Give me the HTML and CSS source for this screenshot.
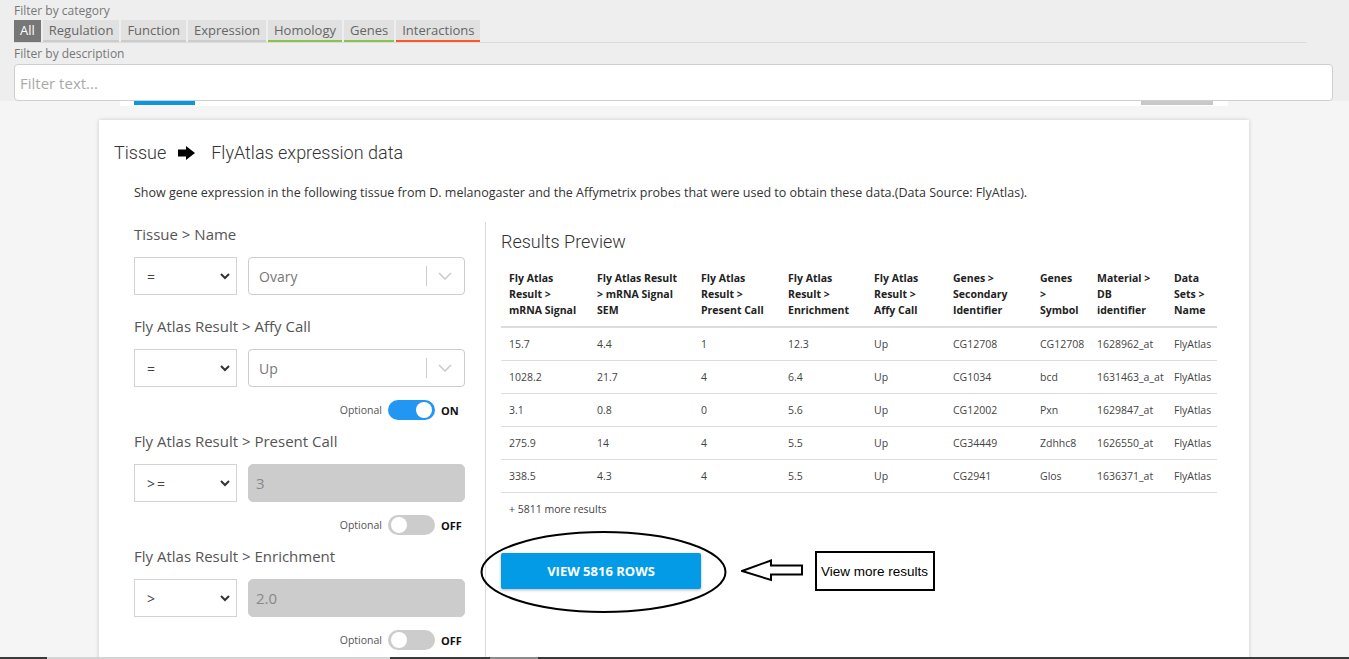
FILE: index.html
```html
<!DOCTYPE html>
<html>
<head>
<meta charset="utf-8">
<title>FlyAtlas expression data</title>
<link rel="stylesheet" href="styles.css">
</head>
<body>
<div class="filters">
  <div class="flabel">Filter by category</div>
  <div class="tabs">
    <span class="tab tab-all">All</span>
    <span class="tab">Regulation</span>
    <span class="tab">Function</span>
    <span class="tab">Expression</span>
    <span class="tab tab-green">Homology</span>
    <span class="tab tab-green">Genes</span>
    <span class="tab tab-orange">Interactions</span>
  </div>
  <div class="flabel flabel-desc">Filter by description</div>
  <input class="finput" type="text" placeholder="Filter text...">
</div>
<div class="peek"><div class="peek-bar"><span class="peek-blue"></span><span class="peek-grey"></span></div></div>

<div class="card">
  <h2 class="title">Tissue <svg class="title-arrow" width="17" height="14" viewBox="0 0 17 14"><polygon points="0,3.5 8,3.5 8,0 17,7 8,14 8,10.5 0,10.5" fill="#000"/></svg> FlyAtlas expression data</h2>
  <p class="desc">Show gene expression in the following tissue from D. melanogaster and the Affymetrix probes that were used to obtain these data.(Data Source: FlyAtlas).</p>
  <div class="body">
    <div class="constraints">
      <div class="field">
        <div class="field-label">Tissue &gt; Name</div>
        <div class="field-row">
          <div class="op"><span>=</span><svg width="10" height="7" viewBox="0 0 10 7"><polyline points="1,1 5,5 9,1" fill="none" stroke="#333" stroke-width="2"/></svg></div>
          <div class="val"><span class="val-text">Ovary</span><span class="val-sep"></span><svg class="val-chev" width="14" height="8" viewBox="0 0 14 8"><polyline points="1,1 7,7 13,1" fill="none" stroke="#ccc" stroke-width="1.6"/></svg></div>
        </div>
      </div>
      <div class="field field-opt">
        <div class="field-label">Fly Atlas Result &gt; Affy Call</div>
        <div class="field-row">
          <div class="op"><span>=</span><svg width="10" height="7" viewBox="0 0 10 7"><polyline points="1,1 5,5 9,1" fill="none" stroke="#333" stroke-width="2"/></svg></div>
          <div class="val"><span class="val-text">Up</span><span class="val-sep"></span><svg class="val-chev" width="14" height="8" viewBox="0 0 14 8"><polyline points="1,1 7,7 13,1" fill="none" stroke="#ccc" stroke-width="1.6"/></svg></div>
        </div>
        <div class="optional"><span>Optional</span><span class="toggle on"></span><span class="state">ON</span></div>
      </div>
      <div class="field field-opt">
        <div class="field-label">Fly Atlas Result &gt; Present Call</div>
        <div class="field-row">
          <div class="op"><span class="op-wide">&gt;=</span><svg width="10" height="7" viewBox="0 0 10 7"><polyline points="1,1 5,5 9,1" fill="none" stroke="#333" stroke-width="2"/></svg></div>
          <div class="val val-disabled">3</div>
        </div>
        <div class="optional"><span>Optional</span><span class="toggle"></span><span class="state">OFF</span></div>
      </div>
      <div class="field field-opt">
        <div class="field-label">Fly Atlas Result &gt; Enrichment</div>
        <div class="field-row">
          <div class="op"><span>&gt;</span><svg width="10" height="7" viewBox="0 0 10 7"><polyline points="1,1 5,5 9,1" fill="none" stroke="#333" stroke-width="2"/></svg></div>
          <div class="val val-disabled">2.0</div>
        </div>
        <div class="optional"><span>Optional</span><span class="toggle"></span><span class="state">OFF</span></div>
      </div>
    </div>

    <div class="preview">
      <h3 class="preview-title">Results Preview</h3>
      <table class="results">
        <colgroup>
          <col class="c1"><col class="c2"><col class="c3"><col class="c4"><col class="c5"><col class="c6"><col class="c7"><col class="c8"><col class="c9">
        </colgroup>
        <thead>
          <tr>
            <th>Fly Atlas<br>Result &gt;<br>mRNA Signal</th>
            <th>Fly Atlas Result<br>&gt; mRNA Signal<br>SEM</th>
            <th>Fly Atlas<br>Result &gt;<br>Present Call</th>
            <th>Fly Atlas<br>Result &gt;<br>Enrichment</th>
            <th>Fly Atlas<br>Result &gt;<br>Affy Call</th>
            <th>Genes &gt;<br>Secondary<br>Identifier</th>
            <th>Genes<br>&gt;<br>Symbol</th>
            <th>Material &gt;<br>DB<br>identifier</th>
            <th>Data<br>Sets &gt;<br>Name</th>
          </tr>
        </thead>
        <tbody>
          <tr><td>15.7</td><td>4.4</td><td>1</td><td>12.3</td><td>Up</td><td>CG12708</td><td>CG12708</td><td>1628962_at</td><td>FlyAtlas</td></tr>
          <tr><td>1028.2</td><td>21.7</td><td>4</td><td>6.4</td><td>Up</td><td>CG1034</td><td>bcd</td><td>1631463_a_at</td><td>FlyAtlas</td></tr>
          <tr><td>3.1</td><td>0.8</td><td>0</td><td>5.6</td><td>Up</td><td>CG12002</td><td>Pxn</td><td>1629847_at</td><td>FlyAtlas</td></tr>
          <tr><td>275.9</td><td>14</td><td>4</td><td>5.5</td><td>Up</td><td>CG34449</td><td>Zdhhc8</td><td>1626550_at</td><td>FlyAtlas</td></tr>
          <tr><td>338.5</td><td>4.3</td><td>4</td><td>5.5</td><td>Up</td><td>CG2941</td><td>Glos</td><td>1636371_at</td><td>FlyAtlas</td></tr>
        </tbody>
      </table>
      <div class="more">+ 5811 more results</div>
      <div class="actions">
        <div class="btn-wrap">
          <button class="btn" type="button">VIEW 5816 ROWS</button>
          <svg class="ring" width="247" height="84" viewBox="0 0 247 84"><ellipse cx="123.5" cy="42" rx="122" ry="40" fill="none" stroke="#000" stroke-width="2"/></svg>
        </div>
        <svg class="note-arrow" width="63" height="24" viewBox="0 0 63 24"><polygon points="1,12 30,1.5 30,6.5 61,6.5 61,15.5 30,15.5 30,21" fill="#fff" stroke="#000" stroke-width="2" stroke-linejoin="miter"/></svg>
        <div class="note">View more results</div>
      </div>
    </div>
  </div>
</div>
<div class="taskbar"></div>
</body>
</html>
```
FILE: styles.css
```css
* { box-sizing: border-box; }
html { overflow: hidden; }
html, body { margin: 0; }
body {
  background: #f5f5f5;
  font-family: "Open Sans", "Noto Sans", sans-serif;
  color: #333;
}

/* ---------- filter panel ---------- */
.filters {
  background: #eeeeee;
  padding: 4px 16px 0 14px;
  height: 101px;
}
.flabel {
  font-size: 12px;
  line-height: 14px;
  color: #777;
}
.flabel-desc { margin-top: 4px; }
.tabs {
  display: flex;
  gap: 2px;
  margin-top: 2px;
  margin-right: 26px;
  border-bottom: 1px solid #dcdcdc;
}
.tab {
  height: 22px;
  padding: 0 6px;
  font-size: 13px;
  line-height: 20px;
  background: #e1e1e1;
  color: #666;
  border-bottom: 2px solid #cccccc;
  white-space: nowrap;
}
.tab-all { background: #777; color: #fff; border-bottom-color: #777; }
.tab-green { border-bottom-color: #8bc34a; }
.tab-orange { border-bottom-color: #ff5722; }
.finput {
  display: block;
  width: 100%;
  height: 37px;
  margin-top: 3px;
  border: 1px solid #cfcfcf;
  border-radius: 4px;
  background: #fff;
  padding: 0 5px;
  font: 15px "Open Sans", sans-serif;
  color: #333;
  outline: none;
}
.finput::placeholder { color: #aaa; }

.peek { height: 5px; }
.peek-bar {
  margin-left: 120px;
  width: 1108px;
  height: 5px;
  background: #fff;
  display: flex;
  justify-content: space-between;
  padding: 0 15px 1px 14px;
}
.peek-blue { width: 61px; background: #0a97dd; }
.peek-grey { width: 72px; background: #c8c8c8; }

/* ---------- card ---------- */
.card {
  margin: 14px 0 0 99px;
  width: 1150px;
  background: #fff;
  box-shadow: 0 0 4px rgba(0, 0, 0, 0.18);
  padding: 21px 31px 60px 15px;
}
.title {
  margin: 0;
  display: flex;
  align-items: center;
  font: 300 18px/24px Roboto, "Open Sans", sans-serif;
  color: #333;
}
.title-arrow { margin: 0 16px 0 12px; }
.desc {
  margin: 19px 0 0 20px;
  font-size: 12.5px;
  line-height: 18px;
  color: #333;
}
.body {
  display: flex;
  margin: 20px 0 0 20px;
}

/* ---------- constraints ---------- */
.constraints {
  width: 352px;
  flex: none;
  padding: 2px 20px 0 0;
  border-right: 1px solid #dcdcdc;
}
.field { margin-bottom: 21px; }
.field-opt { margin-bottom: 11px; }
.field-label {
  font-size: 15px;
  line-height: 20px;
  color: #555;
}
.field-row {
  display: flex;
  gap: 11px;
  margin-top: 13px;
  height: 38px;
}
.op {
  width: 103px;
  flex: none;
  border: 1px solid #d3d3d3;
  display: flex;
  align-items: center;
  justify-content: space-between;
  padding: 0 6px 0 12px;
  font-size: 14px;
  color: #444;
}
.op-wide { letter-spacing: 2px; }
.val {
  flex: 1;
  border: 1px solid #cccccc;
  border-radius: 4px;
  display: flex;
  align-items: center;
  padding-left: 10px;
  font-size: 14px;
  color: #777;
}
.val-text { flex: 1; }
.val-sep { width: 1px; height: 20px; background: #ccc; }
.val-chev { margin: 0 12px 0 11px; }
.val-disabled {
  background: #cccccc;
  border-color: #cccccc;
  border-radius: 5px;
  padding-left: 7px;
  font-size: 15px;
  color: #888;
}
.optional {
  display: flex;
  justify-content: flex-end;
  align-items: center;
  height: 20px;
  margin-top: 13px;
  font-size: 10.5px;
  color: #555;
}
.toggle {
  position: relative;
  width: 47px;
  height: 20px;
  border-radius: 10px;
  background: #cccccc;
  margin: 0 6px;
}
.toggle::after {
  content: "";
  position: absolute;
  top: 2px;
  left: 3px;
  width: 16px;
  height: 16px;
  border-radius: 50%;
  background: #fff;
}
.toggle.on { background: #2196f3; }
.toggle.on::after { left: 28px; }
.state {
  width: 24px;
  font-size: 11px;
  font-weight: 700;
  color: #111;
}

/* ---------- preview ---------- */
.preview {
  flex: 1;
  padding: 8px 0 0 15px;
}
.preview-title {
  margin: 0;
  font: 300 18px/24px Roboto, "Open Sans", sans-serif;
  color: #333;
}
.results {
  margin-top: 8px;
  width: 716px;
  table-layout: fixed;
  border-collapse: collapse;
  font-size: 10.5px;
  line-height: 16px;
}
.c1 { width: 88px; } .c2 { width: 104px; } .c3 { width: 87px; }
.c4 { width: 86px; } .c5 { width: 79px; } .c6 { width: 87px; }
.c7 { width: 57px; } .c8 { width: 77px; } .c9 { width: 51px; }
.results th {
  text-align: left;
  font-weight: 700;
  color: #222;
  padding: 8px 8px;
  border-bottom: 2px solid #dddddd;
  white-space: nowrap;
  vertical-align: top;
}
.results td {
  padding: 8px 8px;
  border-bottom: 1px solid #dddddd;
  white-space: nowrap;
  color: #444;
}
.more {
  margin-top: 8px;
  padding-left: 8px;
  font-size: 10.5px;
  line-height: 16px;
  color: #444;
}
.actions {
  display: flex;
  align-items: center;
  margin-top: 34px;
}
.btn-wrap { position: relative; }
.btn {
  display: block;
  width: 200px;
  height: 36px;
  border: 0;
  border-radius: 2px;
  background: #039be5;
  color: #fff;
  font: 700 13px "Open Sans", sans-serif;
  box-shadow: 0 1px 3px rgba(0, 0, 0, 0.3);
}
.ring {
  position: absolute;
  left: -21px;
  top: -23px;
}
.note-arrow { margin-left: 40px; }
.note {
  margin-left: 11px;
  height: 40px;
  border: 2px solid #000;
  padding: 0 5px 0 4px;
  display: flex;
  align-items: center;
  font: 13.5px "Liberation Sans", Arial, sans-serif;
  color: #000;
}

.taskbar {
  position: fixed;
  left: 0;
  right: 0;
  bottom: 0;
  height: 2px;
  background: linear-gradient(to right, #3a3a3a 0 47px, #d4d4d4 47px 390px, #3a3a3a 390px 490px, #8a8a8a 490px 538px, #3a3a3a 538px);
}
```
